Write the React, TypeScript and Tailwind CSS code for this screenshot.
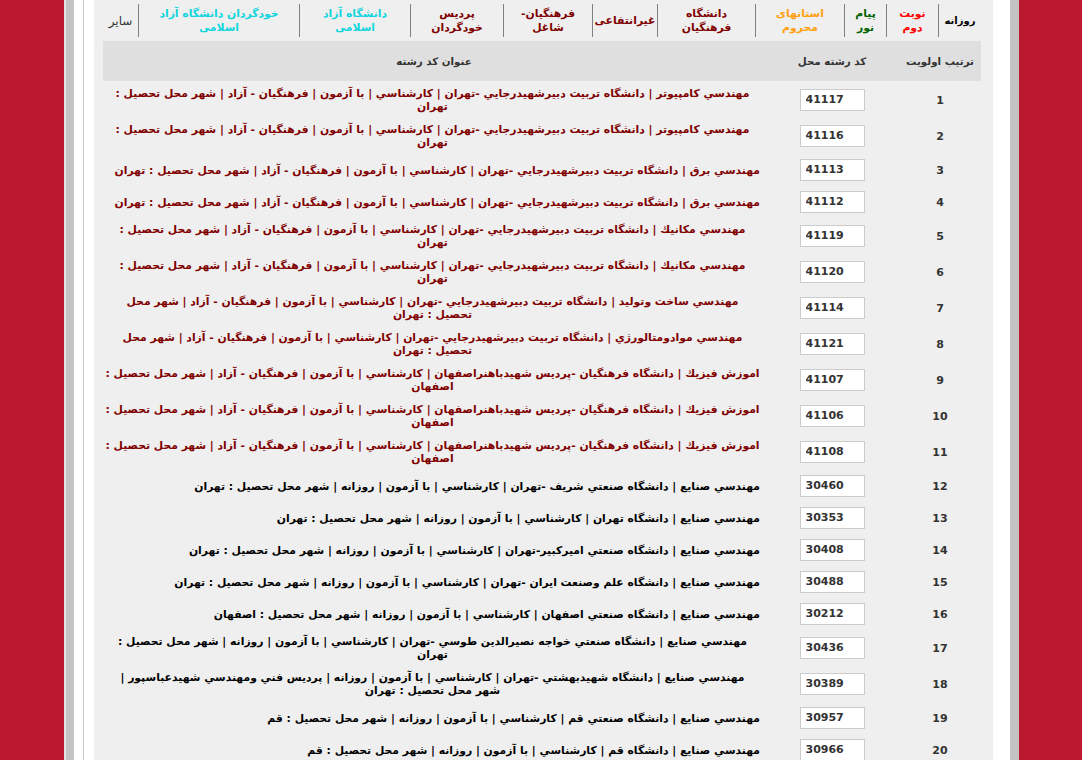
const tabs = [
  { label: "روزانه", w: "w-[43px]", color: "text-black text-[10px]" },
  { label: "نوبت دوم", w: "w-[52px]", color: "text-[#ff0000]" },
  { label: "پيام نور", w: "w-[42px]", color: "text-[#006400]" },
  { label: "استانهاى محروم", w: "w-[89px]", color: "text-[#ffa011]" },
  { label: "دانشگاه فرهنگيان", w: "w-[98px]", color: "text-[#800000]" },
  { label: "غيرانتفاعى", w: "w-[65px]", color: "text-[#800000]" },
  { label: "فرهنگيان- شاغل", w: "w-[89px]", color: "text-[#800000]" },
  { label: "پرديس خودگردان", w: "w-[93px]", color: "text-[#800000]" },
  { label: "دانشگاه آزاد اسلامى", w: "w-[111px]", color: "text-[#11d5dd]" },
  { label: "خودگردان دانشگاه آزاد اسلامى", w: "w-[161px]", color: "text-[#11d5dd]" },
];

const tarbiat = "دانشگاه تربيت دبيرشهيدرجايي -تهران | كارشناسي | با آزمون | فرهنگيان - آزاد | شهر محل تحصيل : تهران";
// no-break spaces keep the end of these titles together on the second line
const tarbiatLong = "دانشگاه تربيت دبيرشهيدرجايي -تهران | كارشناسي | با آزمون | فرهنگيان - آزاد | شهر محل تحصيل\u00a0:\u00a0تهران";
const bahonar = "دانشگاه فرهنگيان -پرديس شهيدباهنراصفهان | كارشناسي | با آزمون | فرهنگيان - آزاد | شهر محل تحصيل : اصفهان";

const rows = [
  { code: "41117", title: "مهندسي كامپيوتر | " + tarbiat, red: true },
  { code: "41116", title: "مهندسي كامپيوتر | " + tarbiat, red: true },
  { code: "41113", title: "مهندسي برق | " + tarbiat, red: true },
  { code: "41112", title: "مهندسي برق | " + tarbiat, red: true },
  { code: "41119", title: "مهندسي مكانيك | " + tarbiat, red: true },
  { code: "41120", title: "مهندسي مكانيك | " + tarbiat, red: true },
  { code: "41114", title: "مهندسي ساخت وتوليد | " + tarbiatLong, red: true },
  { code: "41121", title: "مهندسي موادومتالورژي | " + tarbiatLong, red: true },
  { code: "41107", title: "اموزش فيزيك | " + bahonar, red: true },
  { code: "41106", title: "اموزش فيزيك | " + bahonar, red: true },
  { code: "41108", title: "اموزش فيزيك | " + bahonar, red: true },
  { code: "30460", title: "مهندسي صنايع | دانشگاه صنعتي شريف -تهران | كارشناسي | با آزمون | روزانه | شهر محل تحصيل : تهران" },
  { code: "30353", title: "مهندسي صنايع | دانشگاه تهران | كارشناسي | با آزمون | روزانه | شهر محل تحصيل : تهران" },
  { code: "30408", title: "مهندسي صنايع | دانشگاه صنعتي اميركبير-تهران | كارشناسي | با آزمون | روزانه | شهر محل تحصيل : تهران" },
  { code: "30488", title: "مهندسي صنايع | دانشگاه علم وصنعت ايران -تهران | كارشناسي | با آزمون | روزانه | شهر محل تحصيل : تهران" },
  { code: "30212", title: "مهندسي صنايع | دانشگاه صنعتي اصفهان | كارشناسي | با آزمون | روزانه | شهر محل تحصيل : اصفهان" },
  { code: "30436", title: "مهندسي صنايع | دانشگاه صنعتي خواجه نصيرالدين طوسي -تهران | كارشناسي | با آزمون | روزانه | شهر محل تحصيل : تهران" },
  { code: "30389", title: "مهندسي صنايع | دانشگاه شهيدبهشتي -تهران | كارشناسي | با آزمون | روزانه | پرديس فني ومهندسي شهيدعباسپور | شهر\u00a0محل\u00a0تحصيل\u00a0:\u00a0تهران" },
  { code: "30957", title: "مهندسي صنايع | دانشگاه صنعتي قم | كارشناسي | با آزمون | روزانه | شهر محل تحصيل : قم" },
  { code: "30966", title: "مهندسي صنايع | دانشگاه قم | كارشناسي | با آزمون | روزانه | شهر محل تحصيل : قم" },
];

const App = () => {
  return (
    <div className="flex h-screen overflow-hidden bg-white font-['DejaVu_Sans',sans-serif] text-[10px] leading-[13px]">
      {/* left edge */}
      <div className="w-[64px] shrink-0 bg-[#bb1a2e]" />
      <div className="w-[10px] shrink-0 bg-[#c4c4c4] border-l-2 border-[#e2e2e2]" />
      <div className="w-[20px] shrink-0 bg-white relative">
        <div className="absolute left-[9px] top-0 bottom-0 w-px bg-[#c8c8c8]" />
      </div>

      {/* main panel */}
      <div className="w-[899px] shrink-0 bg-[#efefef] pl-[9px] pr-[12px]" dir="rtl">
        {/* tabs */}
        <div className="flex h-[41px] pt-[4px] pb-[4px] text-[10.8px] leading-[14px]">
          {tabs.map((tab) => (
            <div
              key={tab.label}
              className={`${tab.w} ${tab.color} shrink-0 flex items-center justify-center text-center font-bold border-l border-[#808080] px-[2px]`}
            >
              <span className="max-w-[125px]">{tab.label}</span>
            </div>
          ))}
          <div className="flex-1 flex items-center justify-center text-[12px] text-[#333333]">سایر</div>
        </div>

        {/* table header */}
        <div className="flex h-[40px] items-center bg-[#dfdfdf] text-[10.3px] font-bold text-[#333333]">
          <div className="w-[82px] shrink-0 text-center">ترتیب اولویت</div>
          <div className="w-[134px] shrink-0 text-center">کد رشته محل</div>
          <div className="flex-1 text-center">عنوان کد رشته</div>
        </div>

        {/* rows */}
        {rows.map((row, i) => (
          <div key={row.code} className="flex items-center min-h-[32px] pt-[5px] pb-[4px]">
            <div className="w-[82px] shrink-0 pt-px text-center text-[11px] font-bold text-[#333333]">{i + 1}</div>
            <div className="w-[134px] shrink-0 flex justify-center">
              <input
                readOnly
                dir="ltr"
                value={row.code}
                className="w-[65px] h-[22px] bg-white border border-[#cccccc] px-[5px] text-[11px] font-bold text-[#333333] text-left outline-none"
              />
            </div>
            <div className="flex-1 pt-px pr-[5px] pl-[2px] text-right">
              <span className={`inline-block text-center text-[10.8px] font-bold ${row.red ? "text-[#800000]" : "text-black"}`}>
                {row.title}
              </span>
            </div>
          </div>
        ))}
      </div>

      {/* right edge */}
      <div className="w-[17px] shrink-0 bg-white" />
      <div className="w-[9px] shrink-0 bg-[#c4c4c4]" />
      <div className="flex-1 bg-[#bb1a2e]" />
    </div>
  );
};

export default App;
